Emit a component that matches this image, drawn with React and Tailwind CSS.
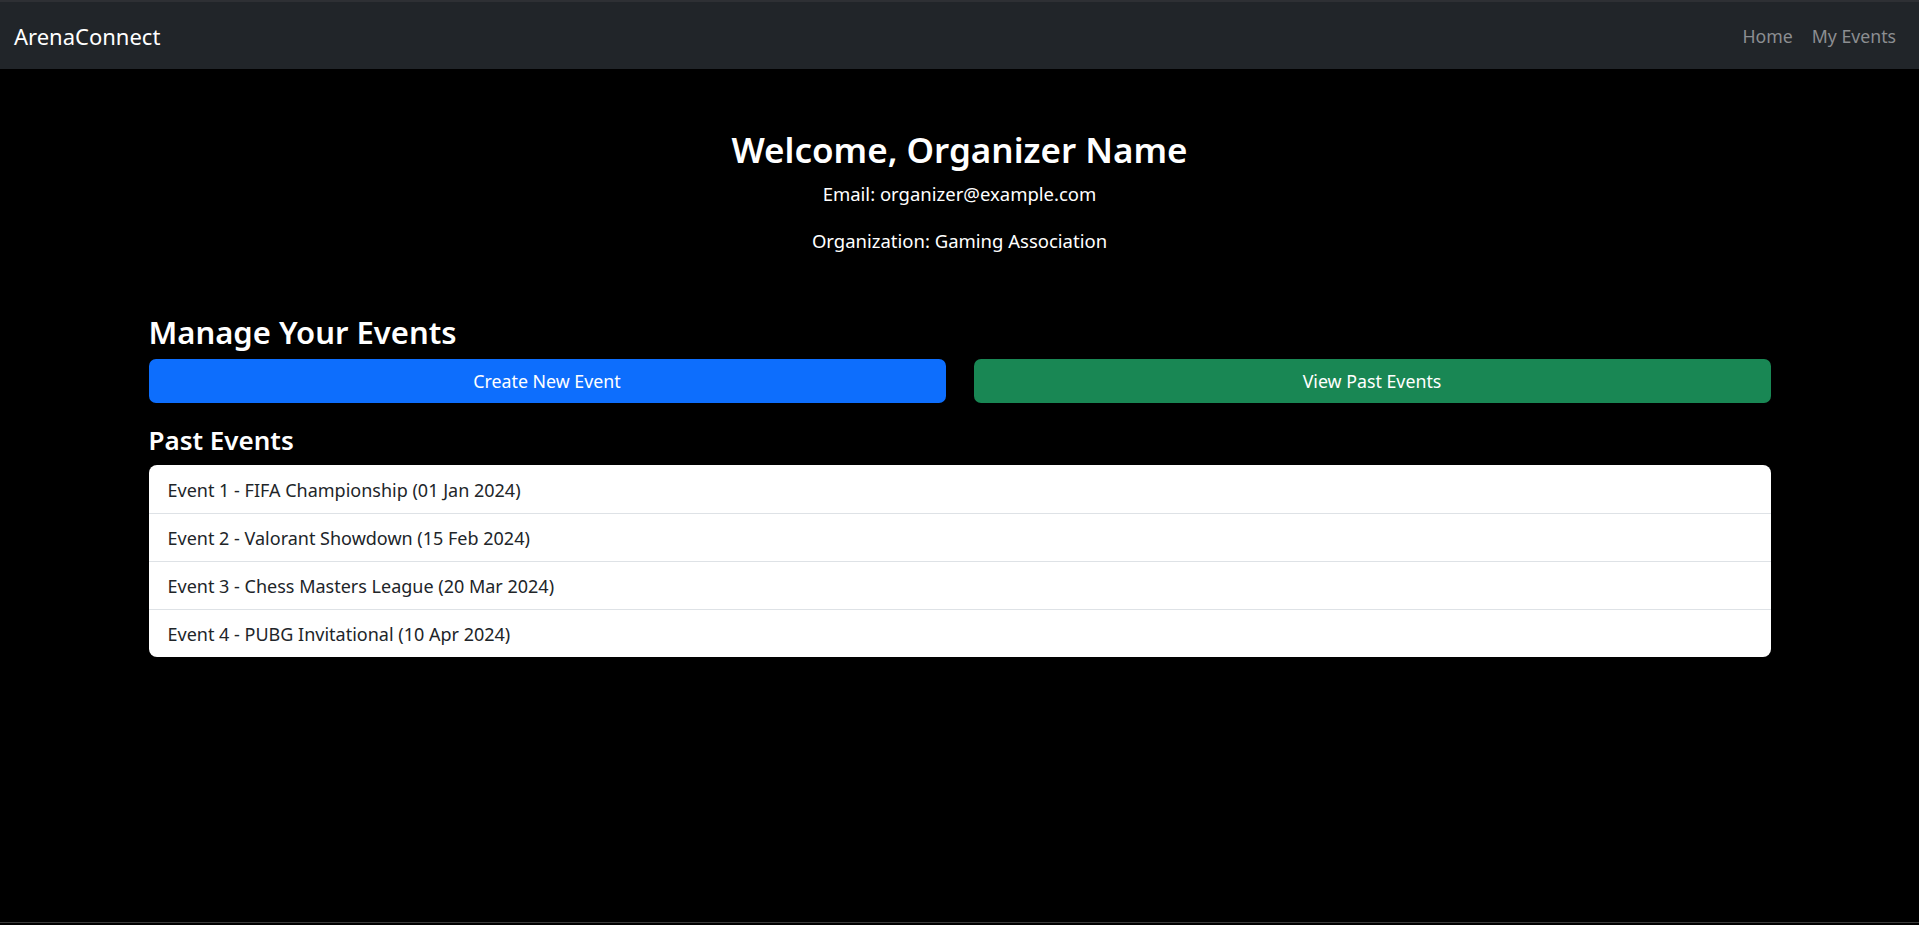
const pastEvents = [
  "Event 1 - FIFA Championship (01 Jan 2024)",
  "Event 2 - Valorant Showdown (15 Feb 2024)",
  "Event 3 - Chess Masters League (20 Mar 2024)",
  "Event 4 - PUBG Invitational (10 Apr 2024)",
];

const App = () => {
  return (
    <div
      className="min-h-[925px] flex flex-col bg-black text-white"
      style={{ fontFamily: '"Noto Sans", "Open Sans", sans-serif' }}
    >
      {/* Navbar */}
      <nav className="h-[69px] border-t-2 border-[#2e3034] bg-[#212529] flex items-center justify-between pl-[14px] pr-[23px]">
        <span className="text-[22px] text-white pt-[1px]">ArenaConnect</span>
        <div className="flex items-center gap-[19px] text-[17.7px] text-[#8c8e91] pt-[1px]">
          <span>Home</span>
          <span>My Events</span>
        </div>
      </nav>

      <main className="flex-1">
        {/* Profile */}
        <section className="mt-[56px] text-center">
          <h2 className="text-[35px] font-semibold leading-[48px] pt-[1px]">
            Welcome, Organizer Name
          </h2>
          <p className="mt-[5px] text-[18.5px] leading-[30px]">
            Email: organizer@example.com
          </p>
          <p className="mt-[17px] text-[18.5px] leading-[30px]">
            Organization: Gaming Association
          </p>
        </section>

        <section className="mx-auto w-[1622px] mt-[55px]">
          <h3 className="text-[31px] font-semibold leading-[42px]">
            Manage Your Events
          </h3>
          <div className="mt-[6px] grid grid-cols-2 gap-[28px]">
            <button className="h-[44px] rounded-[7px] bg-[#0d6efd] text-[17.8px] text-white">
              Create New Event
            </button>
            <button className="h-[44px] rounded-[7px] bg-[#198754] text-[17.8px] text-white">
              View Past Events
            </button>
          </div>

          <h4 className="mt-[19px] text-[26px] font-semibold leading-[36px]">
            Past Events
          </h4>
          <ul className="mt-[7px] rounded-[8px] bg-white overflow-hidden">
            {pastEvents.map((ev, i) => (
              <li
                key={i}
                className={
                  "h-[48px] flex items-center px-[19px] pt-[2px] text-[18px] text-[#212529]" +
                  (i > 0 ? " border-t border-[#dee2e6]" : "")
                }
              >
                {ev}
              </li>
            ))}
          </ul>
        </section>
      </main>

      <footer className="h-[3px] border-t border-[#3a3a3a]" />
    </div>
  );
};

export default App;
